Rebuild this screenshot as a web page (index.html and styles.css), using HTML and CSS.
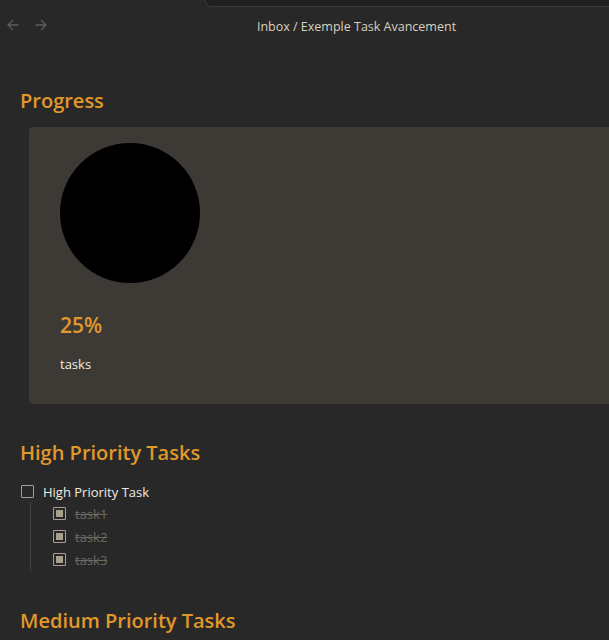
FILE: index.html
```html
<!DOCTYPE html>
<html>
<head>
<meta charset="utf-8">
<link rel="stylesheet" href="styles.css">
</head>
<body>
<div class="tabbar">
  <div class="tab-active"></div>
  <div class="tab-rest"></div>
</div>
<div class="header">
  <div class="nav">
    <svg width="14" height="14" viewBox="0 0 14 14"><path d="M12 7H2M6.5 2.5L2 7l4.5 4.5" fill="none" stroke="#5f5a52" stroke-width="1.4" stroke-linecap="round" stroke-linejoin="round"/></svg>
    <svg width="14" height="14" viewBox="0 0 14 14"><path d="M2 7h10M7.5 2.5L12 7l-4.5 4.5" fill="none" stroke="#5f5a52" stroke-width="1.4" stroke-linecap="round" stroke-linejoin="round"/></svg>
  </div>
  <div class="crumb">Inbox / Exemple Task Avancement</div>
</div>
<main class="content">
  <h2 class="heading">Progress</h2>
  <div class="card">
    <div class="pie"></div>
    <div class="pct">25%</div>
    <div class="label">tasks</div>
  </div>
  <h2 class="heading h-high">High Priority Tasks</h2>
  <ul class="tasks">
    <li class="task">
      <div class="row"><span class="box"></span><span class="txt">High Priority Task</span></div>
      <ul class="sub">
        <li class="row"><span class="box done"></span><span class="txt struck">task1</span></li>
        <li class="row"><span class="box done"></span><span class="txt struck">task2</span></li>
        <li class="row"><span class="box done"></span><span class="txt struck">task3</span></li>
      </ul>
    </li>
  </ul>
  <h2 class="heading h-med">Medium Priority Tasks</h2>
</main>
</body>
</html>
```
FILE: styles.css
```css
html, body {
  margin: 0;
  padding: 0;
  background: #282828;
  font-family: "Open Sans", "Noto Sans", sans-serif;
  overflow: hidden;
}
.tabbar {
  display: flex;
  height: 7px;
}
.tab-active {
  width: 205px;
  background: #282828;
}
.tab-rest {
  flex: 1;
  background: #1f1f1f;
  border: 1px solid #3a3a3a;
  border-top: none;
  border-right: none;
  border-bottom-left-radius: 6px;
}
.header {
  position: relative;
  height: 38px;
  display: flex;
  align-items: center;
  justify-content: center;
  padding-left: 104px;
}
.nav {
  position: absolute;
  left: 6px;
  top: 11px;
  display: flex;
  gap: 14px;
}
.crumb {
  font-size: 12.5px;
  color: #d8cfbd;
}
.content {
  padding: 0 0 0 20px;
}
.heading {
  margin: 0;
  font-size: 20px;
  font-weight: 600;
  color: #e0982a;
  line-height: 26px;
}
.content > .heading:first-child {
  margin-top: 43px;
}
.card {
  margin: 13px 0 0 9px;
  background: #3d3935;
  border-radius: 4px 0 0 4px;
  height: 277px;
  padding: 16px 0 0 31px;
  box-sizing: border-box;
}
.pie {
  width: 140px;
  height: 140px;
  border-radius: 50%;
  background: #000;
}
.pct {
  margin-top: 28px;
  font-size: 21px;
  font-weight: 600;
  color: #e0982a;
  line-height: 28px;
}
.label {
  margin-top: 16px;
  font-size: 13px;
  color: #f1ece2;
  line-height: 18px;
}
.h-high {
  margin-top: 36px;
}
.tasks {
  list-style: none;
  margin: 14px 0 0 0;
  padding: 0;
}
.row {
  display: flex;
  align-items: center;
  height: 23px;
}
.sub .row:first-child {
  margin-top: -1px;
}
.box {
  width: 11px;
  height: 11px;
  border: 1px solid #a89f8d;
  border-radius: 1px;
  margin: 0 9px 0 1px;
  flex: none;
}
.box.done {
  background: #a89f8d;
  box-shadow: inset 0 0 0 2px #282828;
}
.txt {
  font-size: 13px;
  color: #f1ece2;
}
.txt.struck {
  color: #6a6a60;
  text-decoration: line-through;
}
.sub {
  list-style: none;
  margin: 0 0 0 10px;
  padding: 0 0 0 21px;
  border-left: 1px solid #474340;
}
.h-med {
  margin-top: 37px;
}
```
